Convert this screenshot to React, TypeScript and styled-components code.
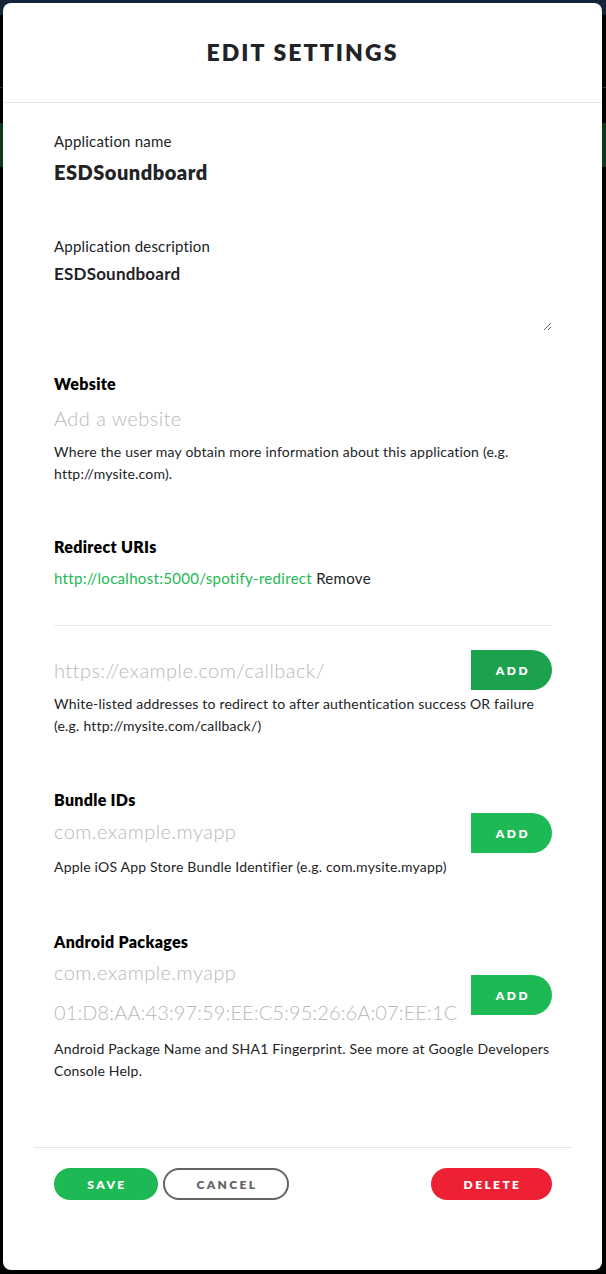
import React from "react";
import styled, { createGlobalStyle } from "styled-components";

const Global = createGlobalStyle`
  html, body { margin: 0; padding: 0; background: #000; }
  body { font-family: "Lato", "Noto Sans", sans-serif; }
  * { box-sizing: border-box; }
`;

const Backdrop = styled.div`
  position: relative;
  width: 606px;
  height: 1274px;
  background: #000;
  overflow: hidden;
  display: flex;
  flex-direction: column;
`;

const NavStrip = styled.div`
  height: 15px;
  background: #13233a;
`;

const BackLine = styled.div`
  margin-top: 72px;
  height: 1px;
  background: #2a2a2a;
`;

const GreenBand = styled.div`
  margin-top: 35px;
  height: 44px;
  background: #0b3a1b;
`;

const Modal = styled.div`
  position: absolute;
  top: 3px;
  left: 3px;
  width: 599px;
  height: 1267px;
  background: #fff;
  border-radius: 8px;
  display: flex;
  flex-direction: column;
`;

const Header = styled.div`
  height: 100px;
  border-bottom: 1px solid #e5e5e5;
  display: flex;
  align-items: center;
  justify-content: center;
  padding-bottom: 1px;
`;

const Title = styled.h1`
  margin: 0;
  font-size: 23px;
  font-weight: 800;
  letter-spacing: 2.1px;
  color: #222326;
`;

const Body = styled.div`
  padding: 28px 50px 0 51px;
  display: flex;
  flex-direction: column;
  flex: 1;
`;

const Field = styled.div<{ $gap?: number }>`
  display: flex;
  flex-direction: column;
  margin-top: ${(p) => p.$gap ?? 0}px;
`;

const LightLabel = styled.div`
  font-size: 15px;
  line-height: 20px;
  font-weight: 400;
  letter-spacing: 0.2px;
  color: #222326;
`;

const BoldLabel = styled.div`
  font-size: 16px;
  line-height: 20px;
  font-weight: 800;
  letter-spacing: 0.3px;
  color: #000;
`;

const NameValue = styled.div`
  margin-top: 9px;
  font-size: 20px;
  line-height: 24px;
  font-weight: 800;
  letter-spacing: 0.5px;
  color: #222326;
`;

const TextArea = styled.textarea`
  margin-top: 7px;
  height: 68px;
  width: 100%;
  border: none;
  outline: none;
  padding: 0;
  resize: vertical;
  font-family: inherit;
  font-size: 17px;
  line-height: 22px;
  font-weight: 700;
  letter-spacing: 0.2px;
  color: #222326;
  background: transparent;
`;

const TextInput = styled.input<{ $h?: number; $shift?: number; $tight?: boolean }>`
  width: 100%;
  height: ${(p) => p.$h ?? 40}px;
  margin-top: ${(p) => p.$shift ?? 0}px;
  border: none;
  outline: none;
  padding: 0;
  font-family: inherit;
  font-size: 20px;
  font-weight: 300;
  letter-spacing: ${(p) => (p.$tight ? "0.1px" : "0.45px")};
  color: #222;
  background: transparent;
  &::placeholder { color: #b8b8b8; }
`;

const Help = styled.p<{ $top?: number }>`
  margin: ${(p) => p.$top ?? 0}px 0 0;
  font-size: 14px;
  line-height: 22px;
  letter-spacing: 0.2px;
  color: #222326;
`;

const UriRow = styled.div`
  margin-top: 11px;
  font-size: 15px;
  line-height: 20px;
  letter-spacing: 0.3px;
  color: #222326;
`;

const UriLink = styled.a`
  color: #1db954;
  text-decoration: none;
`;

const Divider = styled.hr`
  margin: 37px 0 0;
  border: none;
  border-top: 1px solid #ececec;
`;

const AddRow = styled.div<{ $top?: number }>`
  display: flex;
  align-items: center;
  gap: 12px;
  margin-top: ${(p) => p.$top ?? 0}px;
`;

const InputStack = styled.div`
  flex: 1;
  display: flex;
  flex-direction: column;
`;

const AddButton = styled.button<{ $hover?: boolean; $drop?: number }>`
  flex: none;
  width: 81px;
  height: 40px;
  margin-top: ${(p) => p.$drop ?? 0}px;
  border: none;
  border-radius: 0 20px 20px 0;
  background: ${(p) => (p.$hover ? "#1ca24c" : "#1db954")};
  color: #fff;
  font-family: inherit;
  font-size: 12px;
  font-weight: 800;
  letter-spacing: 2.6px;
  padding: 0 0 0 3px;
  cursor: pointer;
`;

const Footer = styled.div`
  margin: 0 30px 0 31px;
  border-top: 1px solid #e5e5e5;
  padding: 20px 20px 70px 20px;
  display: flex;
  align-items: center;
  gap: 5px;
`;

const PillButton = styled.button<{ $kind: "save" | "cancel" | "delete"; $w: number }>`
  width: ${(p) => p.$w}px;
  height: 32px;
  border-radius: 16px;
  font-family: inherit;
  font-size: 12px;
  font-weight: 800;
  letter-spacing: 2.4px;
  padding: 0 0 0 2px;
  cursor: pointer;
  border: ${(p) => (p.$kind === "cancel" ? "2px solid #616467" : "none")};
  background: ${(p) =>
    p.$kind === "save" ? "#1db954" : p.$kind === "delete" ? "#ee2034" : "#fff"};
  color: ${(p) => (p.$kind === "cancel" ? "#616467" : "#fff")};
  margin-left: ${(p) => (p.$kind === "delete" ? "auto" : "0")};
`;

export default function App() {
  return (
    <>
      <Global />
      <Backdrop>
        <NavStrip />
        <BackLine />
        <GreenBand />
        <Modal>
          <Header>
            <Title>EDIT SETTINGS</Title>
          </Header>
          <Body>
            <Field>
              <LightLabel>Application name</LightLabel>
              <NameValue>ESDSoundboard</NameValue>
            </Field>
            <Field $gap={52}>
              <LightLabel>Application description</LightLabel>
              <TextArea defaultValue="ESDSoundboard" />
            </Field>
            <Field $gap={43}>
              <BoldLabel>Website</BoldLabel>
              <TextInput placeholder="Add a website" $h={47} />
              <Help>
                Where the user may obtain more information about this application (e.g.
                http://mysite.com).
              </Help>
            </Field>
            <Field $gap={52}>
              <BoldLabel>Redirect URIs</BoldLabel>
              <UriRow>
                <UriLink href="#">http://localhost:5000/spotify-redirect</UriLink> Remove
              </UriRow>
              <Divider />
              <AddRow $top={24}>
                <InputStack>
                  <TextInput placeholder="https://example.com/callback/" />
                </InputStack>
                <AddButton $hover>ADD</AddButton>
              </AddRow>
              <Help $top={3}>
                White-listed addresses to redirect to after authentication success OR failure
                (e.g. http://mysite.com/callback/)
              </Help>
            </Field>
            <Field $gap={53}>
              <BoldLabel>Bundle IDs</BoldLabel>
              <AddRow $top={3}>
                <InputStack>
                  <TextInput placeholder="com.example.myapp" $shift={-4} />
                </InputStack>
                <AddButton>ADD</AddButton>
              </AddRow>
              <Help $top={3}>Apple iOS App Store Bundle Identifier (e.g. com.mysite.myapp)</Help>
            </Field>
            <Field $gap={54}>
              <BoldLabel>Android Packages</BoldLabel>
              <AddRow>
                <InputStack>
                  <TextInput placeholder="com.example.myapp" />
                  <TextInput placeholder="01:D8:AA:43:97:59:EE:C5:95:26:6A:07:EE:1C" $tight />
                </InputStack>
                <AddButton $drop={6}>ADD</AddButton>
              </AddRow>
              <Help $top={6}>
                Android Package Name and SHA1 Fingerprint. See more at Google Developers
                Console Help.
              </Help>
            </Field>
          </Body>
          <Footer>
            <PillButton $kind="save" $w={104}>SAVE</PillButton>
            <PillButton $kind="cancel" $w={126}>CANCEL</PillButton>
            <PillButton $kind="delete" $w={121}>DELETE</PillButton>
          </Footer>
        </Modal>
      </Backdrop>
    </>
  );
}
